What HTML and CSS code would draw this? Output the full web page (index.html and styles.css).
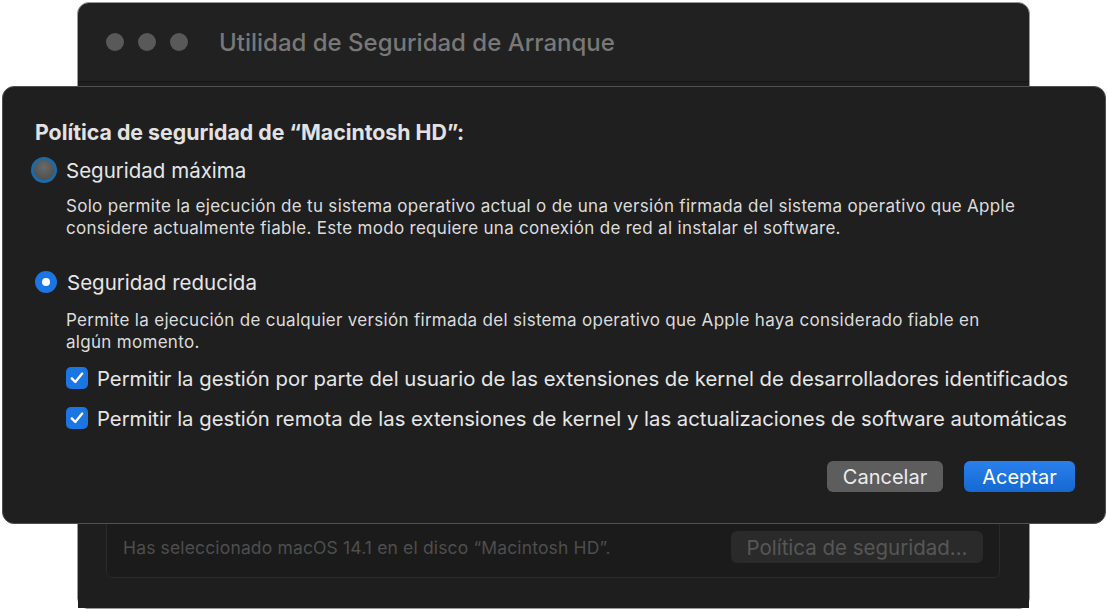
FILE: index.html
```html
<!DOCTYPE html>
<html lang="es">
<head>
  <meta charset="UTF-8">
  <title>Utilidad de Seguridad de Arranque</title>
  <link rel="stylesheet" href="styles.css">
</head>
<body>

  <div class="screen">
    <!-- Ventana de fondo -->
    <div class="window">
      <div class="titlebar">
        <div class="lights">
          <span class="light"></span>
          <span class="light"></span>
          <span class="light"></span>
        </div>
        <div class="title">Utilidad de Seguridad de Arranque</div>
      </div>
      <div class="window-body">
        <div class="group">
          <div class="group-row">
            <span class="group-text">Has seleccionado macOS 14.1 en el disco “Macintosh HD”.</span>
            <span class="btn-disabled">Política de seguridad…</span>
          </div>
        </div>
      </div>
    </div>

    <!-- Hoja de dialogo -->
    <div class="sheet">
      <h2 class="sheet-title">Política de seguridad de “Macintosh HD”:</h2>

      <div class="option">
        <span class="radio radio-focus"></span>
        <span class="option-label">Seguridad máxima</span>
      </div>
      <p class="desc">Solo permite la ejecución de tu sistema operativo actual o de una versión firmada del sistema operativo que Apple considere actualmente fiable. Este modo requiere una conexión de red al instalar el software.</p>

      <div class="option option-second">
        <span class="radio radio-on"></span>
        <span class="option-label">Seguridad reducida</span>
      </div>
      <p class="desc desc-narrow">Permite la ejecución de cualquier versión firmada del sistema operativo que Apple haya considerado fiable en algún momento.</p>

      <div class="check-row">
        <span class="checkbox">
          <svg width="14" height="12" viewBox="0 0 14 12"><path d="M1.8 6.4 L5.3 10 L12.2 1.6" fill="none" stroke="#fff" stroke-width="2.4" stroke-linecap="round" stroke-linejoin="round"/></svg>
        </span>
        <span class="check-label">Permitir la gestión por parte del usuario de las extensiones de kernel de desarrolladores identificados</span>
      </div>
      <div class="check-row">
        <span class="checkbox">
          <svg width="14" height="12" viewBox="0 0 14 12"><path d="M1.8 6.4 L5.3 10 L12.2 1.6" fill="none" stroke="#fff" stroke-width="2.4" stroke-linecap="round" stroke-linejoin="round"/></svg>
        </span>
        <span class="check-label">Permitir la gestión remota de las extensiones de kernel y las actualizaciones de software automáticas</span>
      </div>

      <div class="actions">
        <button class="btn btn-cancel">Cancelar</button>
        <button class="btn btn-ok">Aceptar</button>
      </div>
    </div>
  </div>

</body>
</html>
```

FILE: styles.css
```css
body {
  margin: 0;
  background: #fff;
  font-family: Inter, "Liberation Sans", sans-serif;
}
.screen {
  position: relative;
  width: 1107px;
  height: 612px;
  overflow: hidden;
}

/* ventana de fondo */
.window {
  margin: 2px 0 0 77px;
  width: 951px;
  height: 605px;
  background: #212121;
  border: 1px solid #9a9a9a;
  border-radius: 12px;
  display: flex;
  flex-direction: column;
}
.titlebar {
  height: 78px;
  border-bottom: 1px solid #141414;
  display: flex;
  align-items: center;
  padding-left: 28px;
}
.lights {
  display: flex;
  gap: 14px;
}
.light {
  width: 18px;
  height: 18px;
  border-radius: 50%;
  background: #595959;
}
.title {
  margin-left: 31px;
  font-size: 24px;
  font-weight: 500;
  color: #787878;
}
.window-body {
  flex: 1;
  display: flex;
  flex-direction: column;
  justify-content: flex-end;
  padding: 0 29px 30px 28px;
  background: #1e1e1e;
}
.group {
  height: 92px;
  border: 1px solid #2a2a2a;
  border-radius: 6px;
  background: #1b1b1b;
  display: flex;
  flex-direction: column;
  justify-content: flex-end;
  padding: 0 16px 14px 16px;
}
.group-row {
  display: flex;
  justify-content: space-between;
  align-items: center;
}
.group-text {
  font-size: 17.5px;
  letter-spacing: 0.15px;
  color: #4e4e4e;
}
.btn-disabled {
  width: 252px;
  height: 32px;
  border-radius: 6px;
  background: #2a2a2a;
  color: #575757;
  font-size: 20.5px;
  display: flex;
  align-items: center;
  justify-content: center;
}

/* hoja */
.sheet {
  position: absolute;
  left: 2px;
  top: 86px;
  width: 1102px;
  height: 436px;
  background: #1f1f1f;
  border: 1px solid #505050;
  border-radius: 12px;
}
.sheet-title {
  margin: 33px 0 0 32px;
  font-size: 21.3px;
  font-weight: 700;
  color: #e2e2e2;
  line-height: 24px;
}
.option {
  display: flex;
  align-items: center;
  margin: 11px 0 0 29px;
  height: 30px;
}
.option-second {
  margin-top: 28px;
}
.radio {
  width: 22px;
  height: 22px;
  border-radius: 50%;
  box-sizing: border-box;
  flex-shrink: 0;
}
.radio-focus {
  width: 26px;
  height: 26px;
  margin-left: -1px;
  margin-right: 9px;
  border: 3px solid #1d6aa5;
  background: radial-gradient(circle at 50% 35%, #6a6a6a, #484848);
}
.radio-on {
  margin-left: 3px;
  margin-right: 10px;
  background: #1b75e2;
  position: relative;
}
.radio-on::after {
  content: "";
  position: absolute;
  left: 7px;
  top: 7px;
  width: 8px;
  height: 8px;
  border-radius: 50%;
  background: #fff;
}
.option-label {
  font-size: 20.5px;
  color: #e6e6e6;
}
.desc {
  margin: 10px 0 0 63px;
  font-size: 17px;
  letter-spacing: 0.3px;
  line-height: 22px;
  color: #dcdcdc;
  max-width: 975px;
}
.desc-narrow {
  margin-top: 12px;
  max-width: 940px;
}
.check-row {
  display: flex;
  align-items: center;
  margin: 12px 0 0 63px;
  height: 26px;
}
.check-row + .check-row {
  margin-top: 14px;
}
.checkbox {
  width: 22px;
  height: 22px;
  border-radius: 5px;
  background: #1b75e2;
  display: flex;
  align-items: center;
  justify-content: center;
  margin-right: 9px;
  flex-shrink: 0;
}
.check-label {
  font-size: 20.3px;
  color: #e6e6e6;
  white-space: nowrap;
}
.actions {
  display: flex;
  justify-content: flex-end;
  gap: 21px;
  margin: 30px 30px 0 0;
}
.btn {
  height: 31px;
  border: none;
  border-radius: 6px;
  font-family: inherit;
  font-size: 20px;
  color: #ececec;
  padding: 0;
}
.btn-cancel {
  width: 116px;
  background: #5d5d5d;
}
.btn-ok {
  width: 111px;
  background: linear-gradient(#2a80ec, #1668d2);
  color: #fff;
}
```
